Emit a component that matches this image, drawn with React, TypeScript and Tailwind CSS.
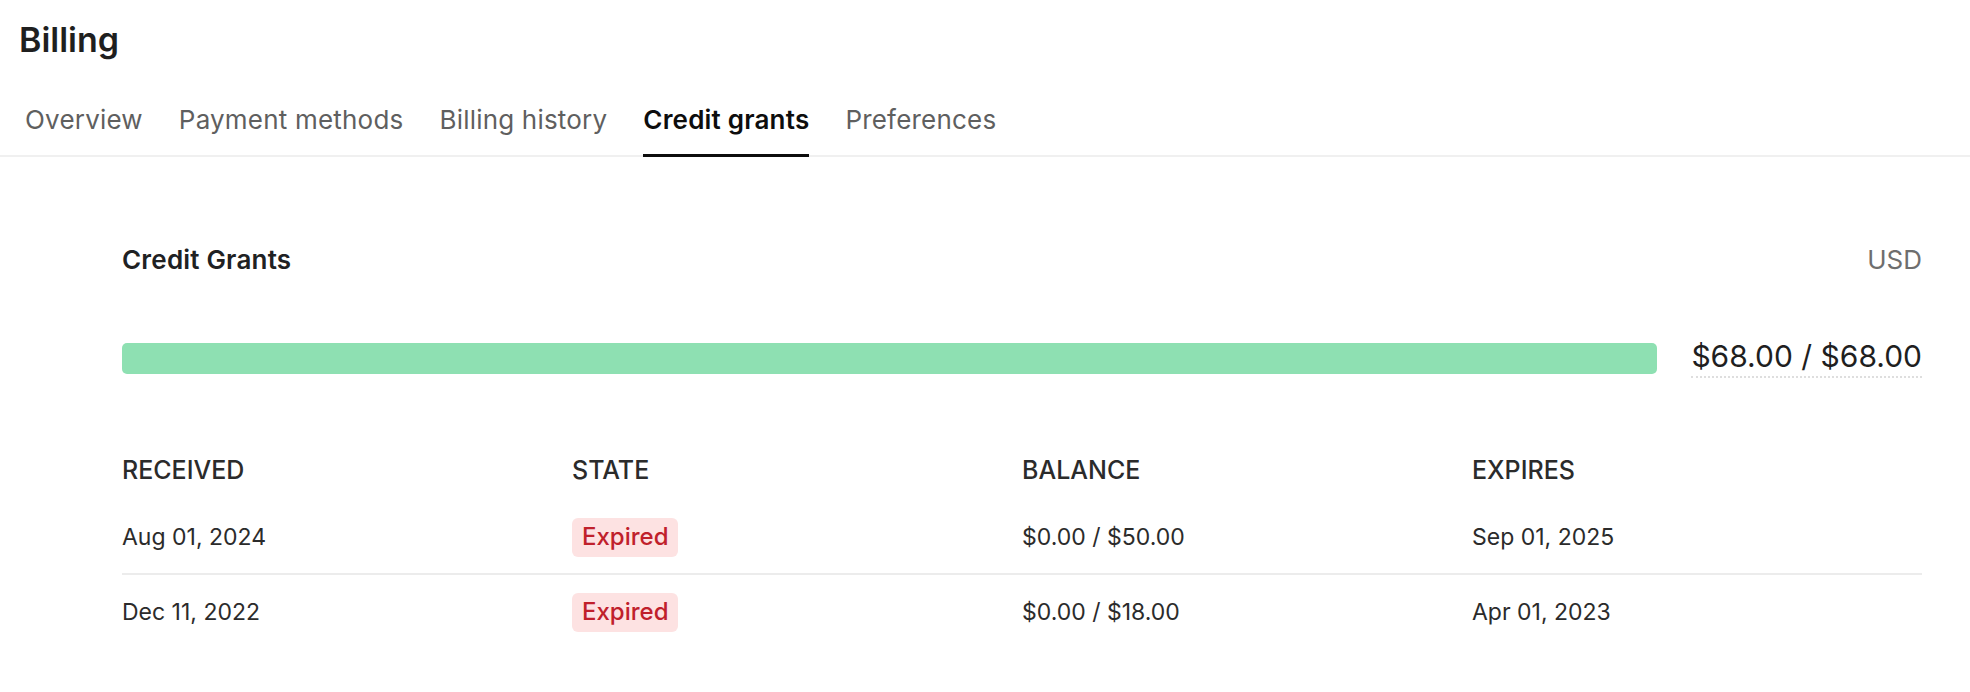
import React from "react";

const tabs = ["Overview", "Payment methods", "Billing history", "Credit grants", "Preferences"];

const rows = [
  { received: "Aug 01, 2024", balance: "$0.00 / $50.00", expires: "Sep 01, 2025" },
  { received: "Dec 11, 2022", balance: "$0.00 / $18.00", expires: "Apr 01, 2023" },
];

export default function App() {
  return (
    <div className="w-[1970px] h-[692px] bg-white text-[#202123] font-['Inter',sans-serif] overflow-hidden">
      <div className="h-[80px] flex items-center px-[19px]">
        <h1 className="text-[34px] font-semibold leading-[38px] text-[#1f1f1f]">Billing</h1>
      </div>
      <div className="flex gap-[36px] px-[25px] border-b-2 border-[#f0f0f0]">
        {tabs.map((t) => {
          const active = t === "Credit grants";
          return (
            <div
              key={t}
              className={
                active
                  ? "pt-[26px] pb-[19px] -mb-[2px] border-b-[3px] border-[#0d0d0d] text-[26px] leading-[28px] tracking-[0.2px] font-semibold text-[#0d0d0d]"
                  : "pt-[26px] pb-[21px] text-[26px] leading-[28px] tracking-[0.2px] text-[#5f5f5f]"
              }
            >
              {t}
            </div>
          );
        })}
      </div>
      <div className="pl-[122px] pr-[48px] pt-[87px]">
        <div className="h-[32px] flex items-center justify-between">
          <div className="text-[26px] font-semibold leading-[32px] tracking-[0.2px]">Credit Grants</div>
          <div className="text-[26px] leading-[32px] text-[#6e6e6e]">USD</div>
        </div>
        <div className="mt-[62px] h-[40px] flex items-center gap-[34px]">
          <div className="flex-1 h-[31px] rounded-[5px] bg-[#8ee0b2]" />
          <div className="text-[30px] leading-[36px] pb-[2px] border-b-2 border-dotted border-[#dedede] text-[#1f1f1f]">
            $68.00 / $68.00
          </div>
        </div>
        <div className="mt-[72px] h-[40px] grid grid-cols-4 items-center text-[25px] font-medium leading-[28px] text-[#2b2b2b]">
          <div>RECEIVED</div>
          <div>STATE</div>
          <div>BALANCE</div>
          <div>EXPIRES</div>
        </div>
        <div className="mt-[11px]">
          {rows.map((r, i) => (
            <div
              key={r.received}
              className={
                i === 0
                  ? "h-[74px] grid grid-cols-4 items-center text-[23px] leading-[28px] text-[#2b2b2b] border-b-2 border-[#ececec]"
                  : "h-[74px] grid grid-cols-4 items-center text-[23px] leading-[28px] text-[#2b2b2b]"
              }
            >
              <div>{r.received}</div>
              <div>
                <span className="inline-flex items-center h-[39px] px-[10px] rounded-[6px] bg-[#fde2e2] text-[#c0202b] text-[24px] font-medium">
                  Expired
                </span>
              </div>
              <div>{r.balance}</div>
              <div>{r.expires}</div>
            </div>
          ))}
        </div>
      </div>
    </div>
  );
}
